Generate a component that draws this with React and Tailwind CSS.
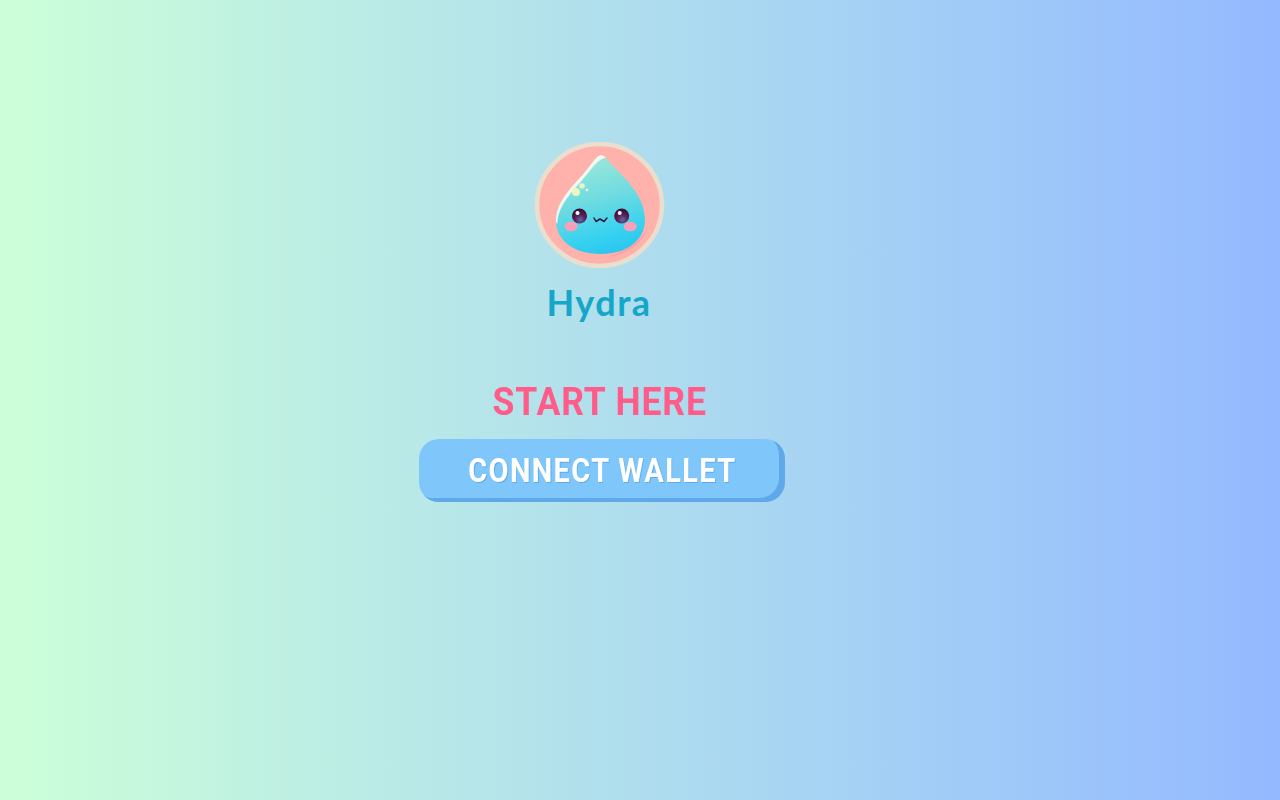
const Logo = () => (
  <svg width="130" height="130" viewBox="0 0 130 130" className="blur-[0.4px]">
    <defs>
      <linearGradient id="drop" x1="0.35" y1="0" x2="0.6" y2="1">
        <stop offset="0" stopColor="#9ee8d8" />
        <stop offset="0.45" stopColor="#6fdbe0" />
        <stop offset="0.8" stopColor="#38d2f0" />
        <stop offset="1" stopColor="#2ac6ee" />
      </linearGradient>
      <radialGradient id="eye" cx="0.55" cy="0.75" r="0.7">
        <stop offset="0" stopColor="#5a6aa8" />
        <stop offset="0.5" stopColor="#5c1d55" />
        <stop offset="1" stopColor="#3a0f32" />
      </radialGradient>
    </defs>
    <ellipse cx="64.5" cy="63" rx="62.5" ry="61" fill="#ffb2ac" stroke="#eadfce" strokeWidth="4.5" />
    <path d="M70 115 C 92 114 112 100 113 80 C 113 90 100 108 70 115 Z" fill="#f59c9c" opacity="0.7" />
    <path d="M66 13 C 70 14 73 19 78 24 C 92 38 110 55 110 78 C 110 98 92 112 66 112 C 38 112 21 98 21 78 C 21 60 38 44 50 30 C 56 23 61 14 66 13 Z" fill="url(#drop)" />
    <path d="M21 80 C 20 60 38 44 50 30 C 56 23 61 14 66 13 C 68 13 70 15 71 16 C 66 15.5 60 22 53 31 C 42 46 23 60 22.3 82 Z" fill="#fffaf2" opacity="0.9" />
    <circle cx="41" cy="50" r="4" fill="#eef5c0" />
    <circle cx="47" cy="44" r="2.8" fill="#e4f5c8" />
    <circle cx="52" cy="48" r="1.3" fill="#eef8d2" />
    <circle cx="44.5" cy="74" r="7.5" fill="url(#eye)" />
    <circle cx="86.7" cy="74" r="7.5" fill="url(#eye)" />
    <circle cx="42.5" cy="71" r="2" fill="#ffffff" />
    <circle cx="84.7" cy="71" r="2" fill="#ffffff" />
    <ellipse cx="36" cy="84.5" rx="6.5" ry="4.8" fill="#f9a0b8" />
    <ellipse cx="95.3" cy="84.5" rx="6.5" ry="4.8" fill="#f9a0b8" />
    <path d="M59 76 L61 79.5 L65 77 L69 79.5 L72 76" fill="none" stroke="#33163f" strokeWidth="1.5" strokeLinecap="round" strokeLinejoin="round" />
  </svg>
);

export default function App() {
  return (
    <div className="min-h-screen bg-gradient-to-r from-[#ccffd8] to-[#94b9ff] flex flex-col items-center pt-[142px] pr-[80px] font-['Roboto',sans-serif]">
      {/* Logo */}
      <Logo />
      <div className="mt-[7px] mr-[2px] text-[36px] leading-[46px] font-bold tracking-[1.5px] text-[#15a6c8] font-['Lato',sans-serif]">Hydra</div>

      <h1 className="mt-[54px] text-[39px] leading-[46px] font-bold tracking-[1px] text-[#ff5c8a] scale-x-[0.91]">START HERE</h1>

      {/* Connect button */}
      <button className="mt-[14px] ml-[4px] w-[366px] h-[63px] rounded-[20px] bg-[#7fc6fa] shadow-[inset_-6px_-4px_0_#60a9e8] text-[33px] font-bold text-white [text-shadow:1px_1px_0_#60a9e8]">
        <span className="inline-block tracking-[1.5px] scale-x-[0.88]">CONNECT WALLET</span>
      </button>
    </div>
  );
}
